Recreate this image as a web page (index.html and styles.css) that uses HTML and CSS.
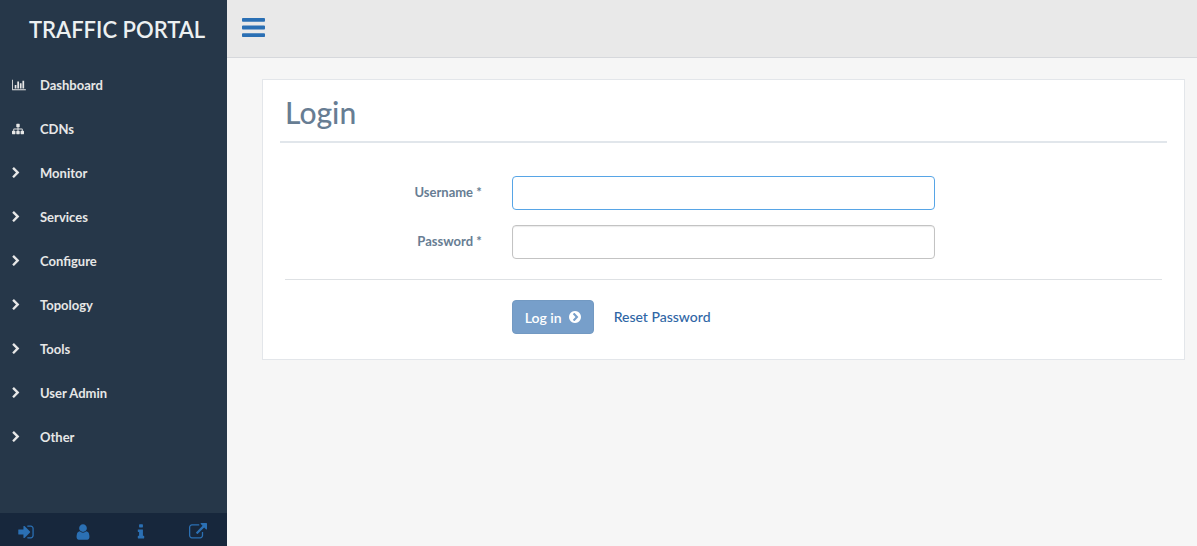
FILE: index.html
```html
<!DOCTYPE html>
<html lang="en">
<head>
<meta charset="utf-8">
<title>Traffic Portal</title>
<link rel="stylesheet" href="styles.css">
</head>
<body>
<svg class="sprite" aria-hidden="true">
  <symbol id="chevron" viewBox="0 0 1792 1792"><path d="M1363 877l-742 742q-19 19-45 19t-45-19l-166-166q-19-19-19-45t19-45l531-531-531-531q-19-19-19-45t19-45l166-166q19-19 45-19t45 19l742 742q19 19 19 45t-19 45z"/></symbol>
</svg>
<div class="app">
  <aside class="sidebar">
    <a class="brand" href="#">TRAFFIC PORTAL</a>
    <nav class="menu">
      <a class="menu-item" href="#"><svg class="icon icon-wide" viewBox="0 0 2048 1792"><path d="M640 896v512h-256v-512h256zm384-512v1024h-256v-1024h256zm1024 1152v128h-2048v-1536h128v1408h1920zm-640-896v768h-256v-768h256zm384-384v1152h-256v-1152h256z"/></svg><span>Dashboard</span></a>
      <a class="menu-item" href="#"><svg class="icon" viewBox="0 0 1792 1792"><path d="M1792 1248v320q0 40-28 68t-68 28h-320q-40 0-68-28t-28-68v-320q0-40 28-68t68-28h96v-192h-512v192h96q40 0 68 28t28 68v320q0 40-28 68t-68 28h-320q-40 0-68-28t-28-68v-320q0-40 28-68t68-28h96v-192h-512v192h96q40 0 68 28t28 68v320q0 40-28 68t-68 28h-320q-40 0-68-28t-28-68v-320q0-40 28-68t68-28h96v-192q0-52 38-90t90-38h512v-192h-96q-40 0-68-28t-28-68v-320q0-40 28-68t68-28h320q40 0 68 28t28 68v320q0 40-28 68t-68 28h-96v192h512q52 0 90 38t38 90v192h96q40 0 68 28t28 68z"/></svg><span>CDNs</span></a>
      <a class="menu-item" href="#"><svg class="icon icon-chevron"><use href="#chevron"/></svg><span>Monitor</span></a>
      <a class="menu-item" href="#"><svg class="icon icon-chevron"><use href="#chevron"/></svg><span>Services</span></a>
      <a class="menu-item" href="#"><svg class="icon icon-chevron"><use href="#chevron"/></svg><span>Configure</span></a>
      <a class="menu-item" href="#"><svg class="icon icon-chevron"><use href="#chevron"/></svg><span>Topology</span></a>
      <a class="menu-item" href="#"><svg class="icon icon-chevron"><use href="#chevron"/></svg><span>Tools</span></a>
      <a class="menu-item" href="#"><svg class="icon icon-chevron"><use href="#chevron"/></svg><span>User Admin</span></a>
      <a class="menu-item" href="#"><svg class="icon icon-chevron"><use href="#chevron"/></svg><span>Other</span></a>
    </nav>
    <div class="sidebar-footer">
      <a class="footer-link" href="#" aria-label="Log in"><svg viewBox="0 0 1792 1792"><path d="M1312 896q0 26-19 45l-544 544q-19 19-45 19t-45-19-19-45v-288h-448q-26 0-45-19t-19-45v-384q0-26 19-45t45-19h448v-288q0-26 19-45t45-19 45 19l544 544q19 19 19 45zm352-352v704q0 119-84.500 203.500t-203.500 84.500h-320q-13 0-22.500-9.500t-9.500-22.500q0-4-1-20t-.5-26.500 3-23.500 10-19.500 20.500-6.500h320q66 0 113-47t47-113v-704q0-66-47-113t-113-47h-312l-11.500-1-11.500-3-8-5.500-7-9-2-13.500q0-4-1-20t-.5-26.500 3-23.500 10-19.500 20.500-6.500h320q119 0 203.500 84.500t84.500 203.500z"/></svg></a>
      <a class="footer-link" href="#" aria-label="User"><svg viewBox="0 0 1792 1792"><path d="M1536 1399q0 109-62.500 187t-150.500 78h-854q-88 0-150.500-78t-62.500-187q0-85 8.500-160.500t31.500-152 58.500-131 94-89 134.500-34.500q131 128 313 128t313-128q76 0 134.500 34.500t94 89 58.500 131 31.500 152 8.500 160.500zm-256-887q0 159-112.500 271.500t-271.500 112.500-271.500-112.500-112.500-271.500 112.500-271.500 271.500-112.500 271.500 112.500 112.500 271.500z"/></svg></a>
      <a class="footer-link" href="#" aria-label="About"><svg viewBox="0 0 1792 1792"><path d="M1216 1344v128q0 26-19 45t-45 19h-512q-26 0-45-19t-19-45v-128q0-26 19-45t45-19h64v-384h-64q-26 0-45-19t-19-45v-128q0-26 19-45t45-19h384q26 0 45 19t19 45v576h64q26 0 45 19t19 45zm-128-1152v192q0 26-19 45t-45 19h-256q-26 0-45-19t-19-45v-192q0-26 19-45t45-19h256q26 0 45 19t19 45z"/></svg></a>
      <a class="footer-link" href="#" aria-label="Open in new window"><svg viewBox="0 0 1792 1792"><path d="M1408 928v320q0 119-84.500 203.500t-203.500 84.500h-832q-119 0-203.500-84.500t-84.500-203.500v-832q0-119 84.500-203.500t203.500-84.500h704q14 0 23 9t9 23v64q0 14-9 23t-23 9h-704q-66 0-113 47t-47 113v832q0 66 47 113t113 47h832q66 0 113-47t47-113v-320q0-14 9-23t23-9h64q14 0 23 9t9 23zm384-864v512q0 26-19 45t-45 19-45-19l-176-176-652 652q-10 10-23 10t-23-10l-114-114q-10-10-10-23t10-23l652-652-176-176q-19-19-19-45t19-45 45-19h512q26 0 45 19t19 45z"/></svg></a>
    </div>
  </aside>
  <div class="content">
    <header class="topbar">
      <button class="menu-toggle" type="button" aria-label="Toggle menu"><svg viewBox="128 0 1536 1792"><path d="M1664 1344v128q0 26-19 45t-45 19h-1408q-26 0-45-19t-19-45v-128q0-26 19-45t45-19h1408q26 0 45 19t19 45zm0-512v128q0 26-19 45t-45 19h-1408q-26 0-45-19t-19-45v-128q0-26 19-45t45-19h1408q26 0 45 19t19 45zm0-512v128q0 26-19 45t-45 19h-1408q-26 0-45-19t-19-45v-128q0-26 19-45t45-19h1408q26 0 45 19t19 45z"/></svg></button>
    </header>
    <main class="panel">
      <h1 class="panel-title">Login</h1>
      <form class="login-form">
        <div class="row">
          <label class="label" for="username">Username *</label>
          <input class="field field-active" id="username" type="text">
        </div>
        <div class="row">
          <label class="label" for="password">Password *</label>
          <input class="field" id="password" type="password">
        </div>
        <hr class="divider">
        <div class="row">
          <div class="actions">
            <button class="submit" type="button">Log in<svg viewBox="0 0 1792 1792"><path d="M845 1395l454-454q19-19 19-45t-19-45l-454-454q-19-19-45-19t-45 19l-102 102q-19 19-19 45t19 45l307 307-307 307q-19 19-19 45t19 45l102 102q19 19 45 19t45-19zm819-499q0 209-103 385.500t-279.500 279.500-385.500 103-385.500-103-279.500-279.500-103-385.500 103-385.500 279.500-279.500 385.500-103 385.500 103 279.500 279.500 103 385.500z"/></svg></button>
            <a class="reset" href="#">Reset Password</a>
          </div>
        </div>
      </form>
    </main>
  </div>
</div>
</body>
</html>
```
FILE: styles.css
```css
* {
  box-sizing: border-box;
}

body {
  margin: 0;
  background: #f6f6f6;
  font-family: Lato, "Liberation Sans", sans-serif;
  font-size: 13px;
}

svg {
  display: block;
  fill: currentColor;
}

a {
  text-decoration: none;
}

.sprite {
  display: none;
}

.app {
  display: flex;
  min-height: 100vh;
}

.sidebar {
  display: flex;
  flex-direction: column;
  flex: none;
  width: 227px;
  background: #263749;
}

.brand {
  padding-left: 29px;
  color: #ecf0f1;
  font-size: 22px;
  font-weight: 600;
  line-height: 59px;
}

.menu {
  display: flex;
  flex-direction: column;
  flex: 1;
  padding-top: 4px;
}

.menu-item {
  display: grid;
  grid-template-columns: 28px 1fr;
  align-items: center;
  height: 44px;
  padding-left: 12px;
  color: #e7e7e7;
  font-weight: 700;
}

.icon {
  width: 12px;
  height: 12px;
}

.icon-wide {
  width: 14px;
}

.icon-chevron {
  margin-left: -2px;
}

.sidebar-footer {
  display: flex;
  justify-content: space-between;
  height: 33px;
  padding: 5px 20px 0 17px;
  background: #17273c;
}

.footer-link {
  display: flex;
  align-items: center;
  color: #2b70b4;
}

.footer-link svg {
  width: 18px;
  height: 18px;
}

.content {
  flex: 1;
  min-width: 0;
}

.topbar {
  display: flex;
  align-items: center;
  height: 58px;
  padding: 0 15px 2px;
  border-bottom: 1px solid #d6d8dc;
  background: #e9e9e9;
}

.menu-toggle {
  padding: 0;
  border: 0;
  background: none;
  color: #2a6fb4;
}

.menu-toggle svg {
  width: 23px;
  height: 27px;
}

.panel {
  margin: 21px 12px 0 35px;
  padding: 10px 17px 25px;
  border: 1px solid #e3e6ea;
  background: #fff;
}

.panel-title {
  margin: 0;
  padding: 0 5px 6px;
  border-bottom: 2px solid #e1e6eb;
  color: #677d93;
  font-size: 30px;
  font-weight: 500;
  line-height: 45px;
}

.login-form {
  padding-top: 33px;
}

.row {
  display: grid;
  grid-template-columns: 1fr 2fr 1fr;
  margin-bottom: 15px;
}

.row:last-child {
  margin-bottom: 0;
}

.label {
  padding: 8px 20px 0 0;
  color: #677d93;
  font-weight: 700;
  line-height: 17px;
  text-align: right;
}

.field {
  height: 34px;
  min-width: 0;
  margin: 0 10px;
  padding: 6px 12px;
  border: 1px solid #c3c3c3;
  border-radius: 4px;
  outline: none;
  background: #fff;
  box-shadow: inset 0 1px 1px rgba(0, 0, 0, 0.08);
  font: inherit;
}

.field-active {
  border-color: #57a5e6;
  box-shadow: none;
}

.divider {
  margin: 20px 5px;
  border: 0;
  border-top: 1px solid #dee1e4;
}

.actions {
  display: flex;
  align-items: center;
  grid-column: 2;
  gap: 20px;
  padding-left: 10px;
}

.submit {
  display: flex;
  align-items: center;
  gap: 6px;
  height: 34px;
  padding: 0 11px 0 12px;
  border: 1px solid #7299c2;
  border-radius: 4px;
  background: #779fca;
  color: #fff;
  font: inherit;
  font-size: 14px;
  font-weight: 600;
}

.submit svg {
  width: 14px;
  height: 14px;
}

.reset {
  padding-bottom: 2px;
  color: #2f66a5;
  font-size: 14px;
  font-weight: 500;
}
```
